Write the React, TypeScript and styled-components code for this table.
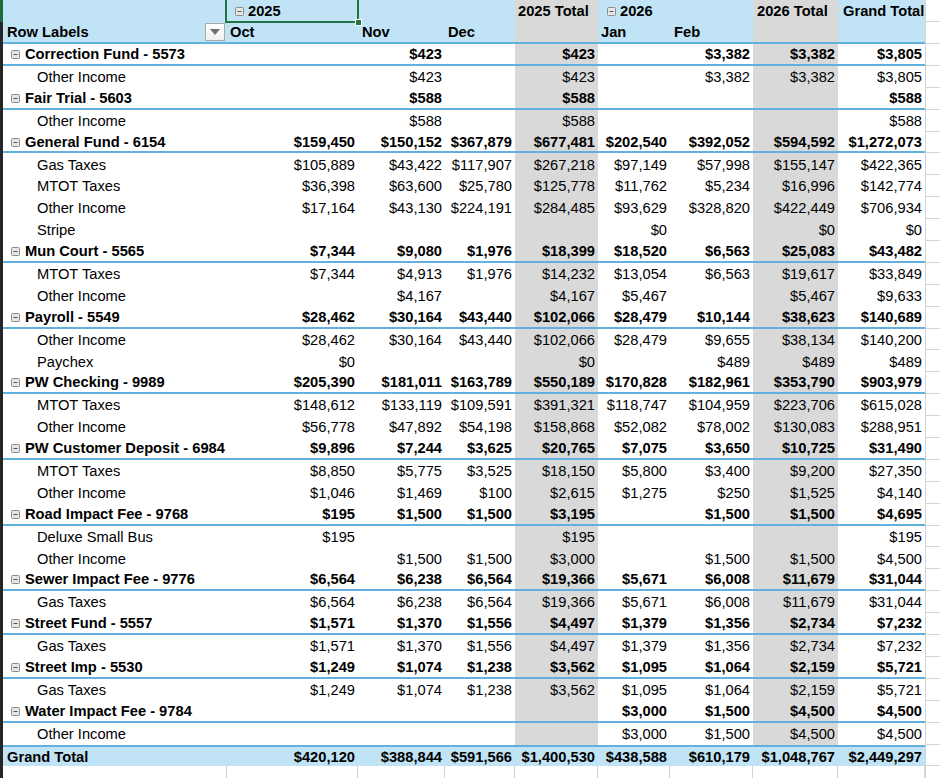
import React from "react";
import styled, { createGlobalStyle, css } from "styled-components";

const GlobalStyle = createGlobalStyle`
  html, body { margin: 0; padding: 0; background: #ffffff; }
  body { font-family: "Liberation Sans", Arial, sans-serif; color: #000; }
`;

const COLS = "224px 131px 87px 70px 83px 72px 83px 85px 87px";
const BLUE_BG = "#c0e4f5";
const GRAY_BG = "#d9d9d9";
const LINE = "#62b1dd";
const GRID = "#d4d4d4";

type Shade = "gray" | "blue" | undefined;

const Sheet = styled.div`
  width: 940px;
  height: 778px;
  overflow: hidden;
  display: flex;
  flex-direction: column;
  font-size: 14.7px;
  line-height: 1;
`;

const Row = styled.div<{ $h?: number }>`
  display: flex;
  flex: none;
  height: ${(p) => p.$h ?? 21.9}px;
`;

const Strip = styled.div<{ $active?: boolean }>`
  width: 3px;
  flex: none;
  background: ${(p) => (p.$active ? "#1e6b3f" : "#262626")};
`;

const Pivot = styled.div<{ $line?: "top" | "bottom"; $bg?: string }>`
  display: grid;
  grid-template-columns: ${COLS};
  width: 922px;
  flex: none;
  box-sizing: border-box;
  background: ${(p) => p.$bg ?? "#ffffff"};
  ${(p) => p.$line === "bottom" && css`border-bottom: 2px solid ${LINE};`}
  ${(p) => p.$line === "top" && css`border-top: 2px solid ${LINE};`}
`;

const Spare = styled.div`
  flex: 1;
  box-sizing: border-box;
  border-left: 1px solid ${GRID};
  border-bottom: 1px solid ${GRID};
`;

const Cell = styled.div<{ $shade?: Shade; $bold?: boolean }>`
  display: flex;
  align-items: center;
  justify-content: flex-end;
  padding: 1px 3px 0 0;
  white-space: nowrap;
  min-width: 0;
  font-weight: ${(p) => (p.$bold ? 700 : 400)};
  background: ${(p) =>
    p.$shade === "gray" ? GRAY_BG : p.$shade === "blue" ? BLUE_BG : "transparent"};
`;

const HeadCell = styled.div<{ $shade?: Shade; $indent?: number }>`
  display: flex;
  align-items: center;
  gap: 4px;
  padding: 1px 0 0 ${(p) => p.$indent ?? 4}px;
  white-space: nowrap;
  font-weight: 700;
  background: ${(p) => (p.$shade === "gray" ? GRAY_BG : "transparent")};
`;

const SelectedHead = styled(HeadCell)`
  position: relative;
  z-index: 2;
  &::after {
    content: "";
    position: absolute;
    left: -2px;
    right: -1px;
    top: -2px;
    bottom: -1px;
    border: 2px solid #217346;
    pointer-events: none;
  }
  &::before {
    content: "";
    position: absolute;
    right: -4px;
    bottom: -4px;
    width: 5px;
    height: 5px;
    background: #217346;
    border: 1px solid #ffffff;
    z-index: 3;
  }
`;

const LabelHead = styled.div`
  display: flex;
  align-items: center;
  justify-content: space-between;
  padding: 1px 2px 0 4px;
  font-weight: 700;
  white-space: nowrap;
`;

const Label = styled.div<{ $kind: "group" | "item" | "total" }>`
  display: flex;
  align-items: center;
  gap: 5px;
  white-space: nowrap;
  font-weight: ${(p) => (p.$kind === "item" ? 400 : 700)};
  padding-top: 1px;
  padding-left: ${(p) => (p.$kind === "group" ? 8 : p.$kind === "item" ? 34 : 4)}px;
`;

const FilterButton = styled.div`
  width: 20px;
  height: 18px;
  margin-top: -1px;
  box-sizing: border-box;
  border: 1px solid #a9a9a9;
  background: linear-gradient(#ffffff, #efefef);
  display: flex;
  align-items: center;
  justify-content: center;
`;

const BlankCell = styled.div`
  border-right: 1px solid ${GRID};
`;

const Collapse = () => (
  <svg width="9" height="9" viewBox="0 0 9 9" style={{ flex: "none" }}>
    <rect x="0.5" y="0.5" width="8" height="8" rx="1" fill="#e6e6e6" stroke="#8c8c8c" />
    <line x1="2.5" y1="4.5" x2="6.5" y2="4.5" stroke="#555" strokeWidth="1" />
  </svg>
);

const Triangle = () => (
  <svg width="10" height="6" viewBox="0 0 10 6">
    <polygon points="0,0 10,0 5,6" fill="#6f6f6f" />
  </svg>
);

type DataRow = { kind: "group" | "item"; label: string; v: string[] };

const E = "";
const rows: DataRow[] = [
  { kind: "group", label: "Correction Fund - 5573", v: [E, "$423", E, "$423", E, "$3,382", "$3,382", "$3,805"] },
  { kind: "item", label: "Other Income", v: [E, "$423", E, "$423", E, "$3,382", "$3,382", "$3,805"] },
  { kind: "group", label: "Fair Trial - 5603", v: [E, "$588", E, "$588", E, E, E, "$588"] },
  { kind: "item", label: "Other Income", v: [E, "$588", E, "$588", E, E, E, "$588"] },
  { kind: "group", label: "General Fund - 6154", v: ["$159,450", "$150,152", "$367,879", "$677,481", "$202,540", "$392,052", "$594,592", "$1,272,073"] },
  { kind: "item", label: "Gas Taxes", v: ["$105,889", "$43,422", "$117,907", "$267,218", "$97,149", "$57,998", "$155,147", "$422,365"] },
  { kind: "item", label: "MTOT Taxes", v: ["$36,398", "$63,600", "$25,780", "$125,778", "$11,762", "$5,234", "$16,996", "$142,774"] },
  { kind: "item", label: "Other Income", v: ["$17,164", "$43,130", "$224,191", "$284,485", "$93,629", "$328,820", "$422,449", "$706,934"] },
  { kind: "item", label: "Stripe", v: [E, E, E, E, "$0", E, "$0", "$0"] },
  { kind: "group", label: "Mun Court - 5565", v: ["$7,344", "$9,080", "$1,976", "$18,399", "$18,520", "$6,563", "$25,083", "$43,482"] },
  { kind: "item", label: "MTOT Taxes", v: ["$7,344", "$4,913", "$1,976", "$14,232", "$13,054", "$6,563", "$19,617", "$33,849"] },
  { kind: "item", label: "Other Income", v: [E, "$4,167", E, "$4,167", "$5,467", E, "$5,467", "$9,633"] },
  { kind: "group", label: "Payroll - 5549", v: ["$28,462", "$30,164", "$43,440", "$102,066", "$28,479", "$10,144", "$38,623", "$140,689"] },
  { kind: "item", label: "Other Income", v: ["$28,462", "$30,164", "$43,440", "$102,066", "$28,479", "$9,655", "$38,134", "$140,200"] },
  { kind: "item", label: "Paychex", v: ["$0", E, E, "$0", E, "$489", "$489", "$489"] },
  { kind: "group", label: "PW Checking - 9989", v: ["$205,390", "$181,011", "$163,789", "$550,189", "$170,828", "$182,961", "$353,790", "$903,979"] },
  { kind: "item", label: "MTOT Taxes", v: ["$148,612", "$133,119", "$109,591", "$391,321", "$118,747", "$104,959", "$223,706", "$615,028"] },
  { kind: "item", label: "Other Income", v: ["$56,778", "$47,892", "$54,198", "$158,868", "$52,082", "$78,002", "$130,083", "$288,951"] },
  { kind: "group", label: "PW Customer Deposit - 6984", v: ["$9,896", "$7,244", "$3,625", "$20,765", "$7,075", "$3,650", "$10,725", "$31,490"] },
  { kind: "item", label: "MTOT Taxes", v: ["$8,850", "$5,775", "$3,525", "$18,150", "$5,800", "$3,400", "$9,200", "$27,350"] },
  { kind: "item", label: "Other Income", v: ["$1,046", "$1,469", "$100", "$2,615", "$1,275", "$250", "$1,525", "$4,140"] },
  { kind: "group", label: "Road Impact Fee - 9768", v: ["$195", "$1,500", "$1,500", "$3,195", E, "$1,500", "$1,500", "$4,695"] },
  { kind: "item", label: "Deluxe Small Bus", v: ["$195", E, E, "$195", E, E, E, "$195"] },
  { kind: "item", label: "Other Income", v: [E, "$1,500", "$1,500", "$3,000", E, "$1,500", "$1,500", "$4,500"] },
  { kind: "group", label: "Sewer Impact Fee - 9776", v: ["$6,564", "$6,238", "$6,564", "$19,366", "$5,671", "$6,008", "$11,679", "$31,044"] },
  { kind: "item", label: "Gas Taxes", v: ["$6,564", "$6,238", "$6,564", "$19,366", "$5,671", "$6,008", "$11,679", "$31,044"] },
  { kind: "group", label: "Street Fund - 5557", v: ["$1,571", "$1,370", "$1,556", "$4,497", "$1,379", "$1,356", "$2,734", "$7,232"] },
  { kind: "item", label: "Gas Taxes", v: ["$1,571", "$1,370", "$1,556", "$4,497", "$1,379", "$1,356", "$2,734", "$7,232"] },
  { kind: "group", label: "Street Imp - 5530", v: ["$1,249", "$1,074", "$1,238", "$3,562", "$1,095", "$1,064", "$2,159", "$5,721"] },
  { kind: "item", label: "Gas Taxes", v: ["$1,249", "$1,074", "$1,238", "$3,562", "$1,095", "$1,064", "$2,159", "$5,721"] },
  { kind: "group", label: "Water Impact Fee - 9784", v: [E, E, E, E, "$3,000", "$1,500", "$4,500", "$4,500"] },
  { kind: "item", label: "Other Income", v: [E, E, E, E, "$3,000", "$1,500", "$4,500", "$4,500"] },
];

const grandTotal = ["$420,120", "$388,844", "$591,566", "$1,400,530", "$438,588", "$610,179", "$1,048,767", "$2,449,297"];

const TOTAL_COLS = [3, 6];

export default function App() {
  return (
    <>
      <GlobalStyle />
      <Sheet>
        <Row $h={22}>
          <Strip $active />
          <Pivot $bg={BLUE_BG}>
            <HeadCell />
            <SelectedHead $indent={8}>
              <Collapse />
              2025
            </SelectedHead>
            <HeadCell />
            <HeadCell />
            <HeadCell $shade="gray" $indent={3}>2025 Total</HeadCell>
            <HeadCell $indent={9}>
              <Collapse />
              2026
            </HeadCell>
            <HeadCell />
            <HeadCell $shade="gray" $indent={4}>2026 Total</HeadCell>
            <HeadCell $indent={5}>Grand Total</HeadCell>
          </Pivot>
          <Spare />
        </Row>
        <Row $h={22}>
          <Strip />
          <Pivot $bg={BLUE_BG} $line="bottom">
            <LabelHead>
              Row Labels
              <FilterButton>
                <Triangle />
              </FilterButton>
            </LabelHead>
            <HeadCell $indent={3}>Oct</HeadCell>
            <HeadCell $indent={4}>Nov</HeadCell>
            <HeadCell $indent={3}>Dec</HeadCell>
            <HeadCell $shade="gray" />
            <HeadCell $indent={3}>Jan</HeadCell>
            <HeadCell $indent={4}>Feb</HeadCell>
            <HeadCell $shade="gray" />
            <HeadCell />
          </Pivot>
          <Spare />
        </Row>
        {rows.map((r, i) => (
          <Row key={i}>
            <Strip />
            <Pivot $line={r.kind === "group" ? "bottom" : undefined}>
              <Label $kind={r.kind}>
                {r.kind === "group" && <Collapse />}
                {r.label}
              </Label>
              {r.v.map((val, j) => (
                <Cell
                  key={j}
                  $bold={r.kind === "group"}
                  $shade={TOTAL_COLS.includes(j) ? "gray" : undefined}
                >
                  {val}
                </Cell>
              ))}
            </Pivot>
            <Spare />
          </Row>
        ))}
        <Row>
          <Strip />
          <Pivot $bg={BLUE_BG} $line="top">
            <Label $kind="total">Grand Total</Label>
            {grandTotal.map((val, j) => (
              <Cell key={j} $bold>
                {val}
              </Cell>
            ))}
          </Pivot>
          <Spare />
        </Row>
        <Row $h={22}>
          <Strip />
          <Pivot>
            {Array.from({ length: 9 }).map((_, j) => (
              <BlankCell key={j} />
            ))}
          </Pivot>
          <Spare />
        </Row>
      </Sheet>
    </>
  );
}
